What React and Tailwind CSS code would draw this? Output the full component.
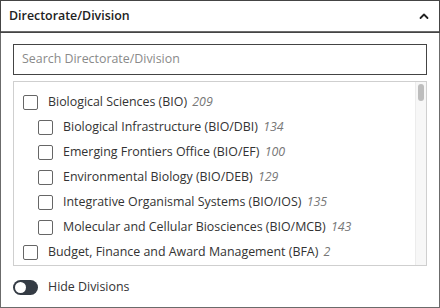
import React, { useState } from 'react';

const items = [
    { label: 'Biological Sciences (BIO)', count: 209, child: false },
    { label: 'Biological Infrastructure (BIO/DBI)', count: 134, child: true },
    { label: 'Emerging Frontiers Office (BIO/EF)', count: 100, child: true },
    { label: 'Environmental Biology (BIO/DEB)', count: 129, child: true },
    { label: 'Integrative Organismal Systems (BIO/IOS)', count: 135, child: true },
    { label: 'Molecular and Cellular Biosciences (BIO/MCB)', count: 143, child: true },
    { label: 'Budget, Finance and Award Management (BFA)', count: 2, child: false },
];

export default function App() {
    const [checked, setChecked] = useState({});
    const [hide, setHide] = useState(false);

    return (
        <div className="w-[440px] h-[308px] bg-white text-[#333] overflow-hidden font-['Open_Sans',sans-serif]">
            <div className="h-full flex flex-col border border-[#6b6b6b]">
                {/* Header */}
                <div className="h-[31px] shrink-0 flex items-center justify-between pl-[8px] pr-[9px] border-b border-[#6b6b6b] outline outline-1 outline-[#444]">
                    <span className="text-[12.4px] font-semibold text-[#222]">Directorate/Division</span>
                    <svg width="12" height="12" viewBox="0 0 12 12" fill="none">
                        <path d="M2.5 8 L6 4.5 L9.5 8" stroke="#222" strokeWidth="1.8" strokeLinecap="round" strokeLinejoin="round" />
                    </svg>
                </div>

                {/* Body */}
                <div className="flex-1 flex flex-col px-[12px] pt-[12px]">
                    <div className="h-[31px] shrink-0 border border-[#444] flex items-center px-[8px]">
                        <input
                            placeholder="Search Directorate/Division"
                            className="w-full text-[12.4px] outline-none placeholder:text-[#8a8a8a] bg-transparent"
                        />
                    </div>

                    <div className="mt-[6px] h-[185px] shrink-0 border border-[#cfcfcf] flex overflow-hidden">
                        <div className="flex-1 pt-[8px] flex flex-col">
                            {items.map((it, i) => (
                                <label
                                    key={i}
                                    className={`h-[25px] shrink-0 flex items-center gap-[10px] cursor-pointer ${it.child ? 'pl-[24px]' : 'pl-[9px]'}`}
                                >
                                    <input
                                        type="checkbox"
                                        checked={!!checked[i]}
                                        onChange={() => setChecked({ ...checked, [i]: !checked[i] })}
                                        className="appearance-none w-[15px] h-[15px] shrink-0 border border-[#666] rounded-[2px] bg-white checked:bg-[#333]"
                                    />
                                    <span className="text-[12.4px] whitespace-nowrap">
                                        {it.label}{' '}
                                        <span className="italic text-[#777] ml-[2px]">{it.count}</span>
                                    </span>
                                </label>
                            ))}
                        </div>
                        <div className="w-[11px] shrink-0 bg-[#f7f7f7] border-l border-[#ececec] flex justify-center pt-[2px]">
                            <div className="w-[6px] h-[17px] rounded-full bg-[#bdbdbd]" />
                        </div>
                    </div>

                    <div className="mt-[12px] flex items-center gap-[10px]">
                        <button
                            onClick={() => setHide(!hide)}
                            className={`w-[25px] h-[15px] rounded-full bg-[#343b44] flex items-center px-[2px] ${hide ? 'justify-end' : 'justify-start'}`}
                        >
                            <span className="w-[11px] h-[11px] rounded-full bg-white" />
                        </button>
                        <span className="text-[12.4px]">Hide Divisions</span>
                    </div>
                </div>
            </div>
        </div>
    );
}
